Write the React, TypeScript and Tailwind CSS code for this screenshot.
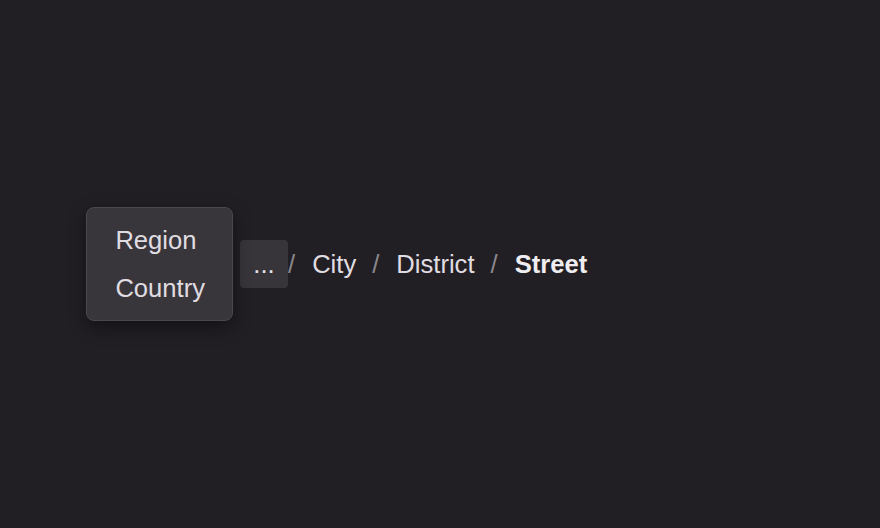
import React from 'react';

const crumbs = ['City', 'District'];

const Slash = ({ first }: { first?: boolean }) => (
   <span className={`${first ? 'ml-0' : 'ml-4'} mr-[17px] text-[#8a878c]`}>/</span>
);

export default function App() {
   return (
      <div
         className="flex h-[528px] w-full items-center bg-[#221f24] pl-[240px] text-[25.6px] text-[#e0dde2]"
         style={{ fontFamily: '"Liberation Sans", Arial, sans-serif' }}
      >
         <nav aria-label="breadcrumb">
            <ol className="flex items-center leading-[48px]">
               <li className="relative flex items-center">
                  {/* popup with collapsed crumbs */}
                  <div className="absolute right-full top-1/2 mr-[7px] flex -translate-y-1/2 flex-col rounded-lg border border-[#4b484d] bg-[#39363b] py-2 pl-[28px] pr-[27px] shadow-[0_6px_18px_rgba(0,0,0,0.45)]">
                     <span className="h-12 whitespace-nowrap">Region</span>
                     <span className="h-12 whitespace-nowrap">Country</span>
                  </div>
                  <button className="flex h-12 w-12 items-center justify-center rounded bg-[#38353a] text-[#e6e3e8]">
                     ...
                  </button>
               </li>
               <Slash first />
               {crumbs.map((c) => (
                  <React.Fragment key={c}>
                     <li>{c}</li>
                     <Slash />
                  </React.Fragment>
               ))}
               <li className="font-bold text-[#efedf0]">Street</li>
            </ol>
         </nav>
      </div>
   );
}
